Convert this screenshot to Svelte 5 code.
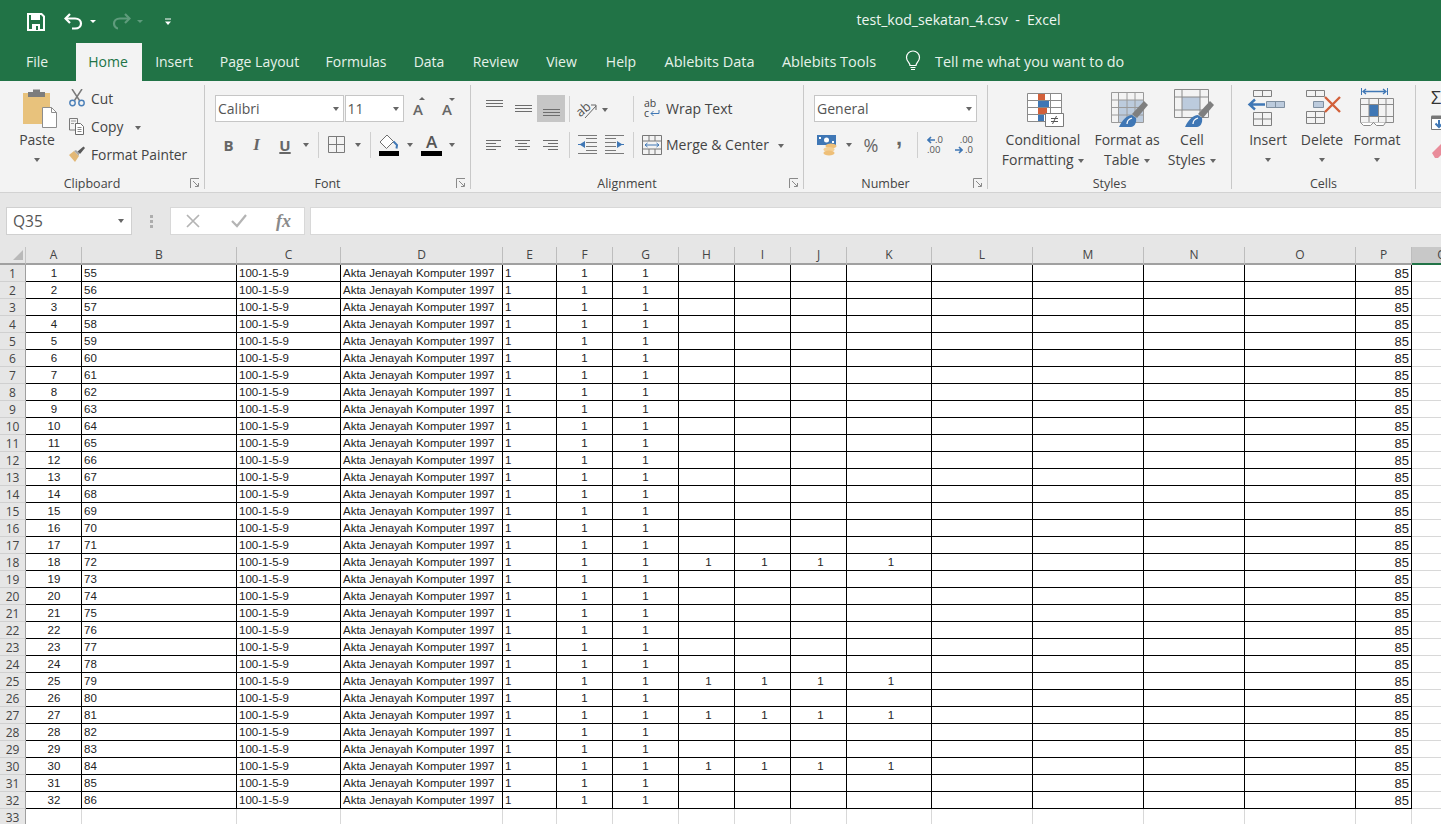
<script>
  const tabs = ['File','Home','Insert','Page Layout','Formulas','Data','Review','View','Help','Ablebits Data','Ablebits Tools'];
  const cols = ['A','B','C','D','E','F','G','H','I','J','K','L','M','N','O','P'];
  const extra = [18,25,27,30];
  const rows = Array.from({length:32},(_,i)=>i+1);
  const cellClass = (c) => {
    if (c==='B'||c==='C'||c==='D'||c==='E') return 'left';
    if (c==='P') return 'right';
    if (c==='H'||c==='I'||c==='J'||c==='K') return 'center shift';
    if (c==='A') return 'center idx';
    return 'center';
  };
  const value = (c,n) => {
    switch(c){
      case 'A': return n;
      case 'B': return n+54;
      case 'C': return '100-1-5-9';
      case 'D': return 'Akta Jenayah Komputer 1997';
      case 'E': case 'F': case 'G': return 1;
      case 'H': case 'I': case 'J': case 'K': return extra.includes(n) ? 1 : '';
      case 'P': return 85;
      default: return '';
    }
  };
</script>

{#snippet caret()}<span class="caret"></span>{/snippet}
{#snippet launcher()}
  <svg class="launcher" width="10" height="11" viewBox="0 0 10 11"><path d="M.5 10V.5H9" fill="none" stroke="#8a8a8a"/><path d="M3 3l5 5M8.500 5v3.500H5" fill="none" stroke="#8a8a8a"/></svg>
{/snippet}
{#snippet lines(l)}
  <svg width="22" height="22" viewBox="0 0 22 22">{#each l as [a,b,y]}<path d="M{a} {y+.5}H{b}" stroke="#6d6d6d"/>{/each}</svg>
{/snippet}
{#snippet sep()}<span class="vsep"></span>{/snippet}
{#snippet brush(blobX, blobY)}
  <g transform="translate({blobX} {blobY})">
    <path d="M25 -14L29 -10 18 3 13 -1Z" fill="#7f7f7f"/>
    <path d="M0 12C3 5 8 0 13 0L17 3C18 8 15 12 12 12Z" fill="#3f77b5"/>
    <path d="M8 9C8 6 10 4 13 3" fill="none" stroke="#fff" stroke-width="1.300"/>
  </g>
{/snippet}

<div class="app">
  <header class="title">
    <div class="qat">
      <svg class="save" width="18" height="18" viewBox="0 0 18 18"><path d="M1 1h13.500L17 3.500V17H1Z" fill="none" stroke="#fff" stroke-width="2"/><path d="M4 2h9v5H4Z" fill="#fff"/><path d="M5 11h8v6H5Z" fill="#fff"/><path d="M9 13h2v4H9Z" fill="#217346"/></svg>
      <svg class="undo" width="20" height="18" viewBox="0 0 20 18"><path d="M6 1L1.500 5.500 6 10" fill="none" stroke="#fff" stroke-width="2.200"/><path d="M2 5.500h9c4 0 6 2.500 6 5s-2 5-6 5H8" fill="none" stroke="#fff" stroke-width="2.200"/></svg>
      <span class="qcaret"></span>
      <svg class="redo" width="20" height="18" viewBox="0 0 20 18"><path d="M14 1l4.500 4.500L14 10" fill="none" stroke="#5f9b7c" stroke-width="2.200"/><path d="M18 5.500H9c-4 0-6 2.500-6 5s2 5 4 5" fill="none" stroke="#5f9b7c" stroke-width="2.200"/></svg>
      <span class="qcaret dim"></span>
      <svg class="custom" width="8" height="8" viewBox="0 0 8 8"><path d="M1 1h6" stroke="#fff"/><path d="M1 3.500h6L4 7Z" fill="#fff"/></svg>
    </div>
    <div class="doc">test_kod_sekatan_4.csv&nbsp; - &nbsp;Excel</div>
  </header>

  <nav class="tabs">
    {#each tabs as t}
      <div class="tab" class:active={t==='Home'}>{t}</div>
    {/each}
    <div class="tell">
      <svg width="18" height="22" viewBox="0 0 18 22"><path d="M6 15.500C6 12.500 2.500 11.500 2.500 7.500a6.500 6.500 0 0 1 13 0c0 4-3.500 5-3.500 8Z" fill="none" stroke="#fff" stroke-width="1.200"/><path d="M6.500 17.500h5M7 19.500h4" stroke="#fff" stroke-width="1.200"/></svg>
      <span>Tell me what you want to do</span>
    </div>
  </nav>

  <section class="ribbon">
    <!-- Clipboard -->
    <div class="group g-clip">
      <div class="body clip-body">
        <div class="paste">
          <svg width="40" height="40" viewBox="0 0 40 40">
            <path d="M3 5h27v31H3Z" fill="#e8c27c"/>
            <path d="M8 4h5V1.500h7V4h5v5H8Z" fill="#7d7d7d"/>
            <path d="M22.500 19.500h9l5 5v15h-14Z" fill="#fff" stroke="#8d8d8d"/>
            <path d="M31.500 19.500v5h5" fill="none" stroke="#8d8d8d"/>
          </svg>
          <span class="paste-text">Paste</span>
          <span class="paste-caret">{@render caret()}</span>
        </div>
        <div class="clip-col">
          <div class="clip-row">
            <svg width="18" height="18" viewBox="0 0 18 18"><path d="M4 0l7.500 11.500M14 0L6.500 11.500" stroke="#7a7a7a" stroke-width="1.500"/><circle cx="4.500" cy="14" r="2.700" fill="none" stroke="#4a7fb8" stroke-width="1.400"/><circle cx="13.500" cy="14" r="2.700" fill="none" stroke="#4a7fb8" stroke-width="1.400"/></svg>
            <span>Cut</span>
          </div>
          <div class="clip-row">
            <svg width="18" height="18" viewBox="0 0 18 18"><path d="M1.500 1.500h8V13h-8Z" fill="#f3f3f3" stroke="#7a7a7a"/><path d="M3 4h5M3 6.500h3" stroke="#9a9a9a"/><path d="M7.500 6.500h5l3 3v8h-8Z" fill="#fff" stroke="#6b6b6b"/><path d="M9.500 10.500h4M9.500 12.500h4M9.500 14.500h4" stroke="#8a8a8a"/></svg>
            <span>Copy</span>
            <span class="copy-caret">{@render caret()}</span>
          </div>
          <div class="clip-row">
            <svg width="18" height="18" viewBox="0 0 18 18"><path d="M1 10l5-4 5 5-4 6C5 15 3 12 1 10Z" fill="#e2b877"/><path d="M6 6l2-1 3 3 0 3Z" fill="#a8a8a8"/><path d="M9.500 6.500l6-5 1.500 1.500-5 6Z" fill="#595959"/></svg>
            <span>Format Painter</span>
          </div>
        </div>
      </div>
      <div class="label pad">Clipboard</div>
      {@render launcher()}
    </div>

    <!-- Font -->
    <div class="group g-font">
      <div class="body stack">
        <div class="row font1">
          <div class="combo">Calibri {@render caret()}</div>
          <div class="combo">11 {@render caret()}</div>
          <span class="grow-a up">A</span>
          <span class="grow-a down">A</span>
        </div>
        <div class="row font2">
          <b class="fmt">B</b>
          <i class="fmt it">I</i>
          <u class="fmt bold">U</u>
          {@render caret()}
          {@render sep()}
          <svg width="17" height="17" viewBox="0 0 17 17"><path d="M.5.500h16v16H.500ZM8.500.500v16M.5 8.500h16" fill="none" stroke="#7a7a7a"/></svg>
          {@render caret()}
          {@render sep()}
          <svg width="21" height="22" viewBox="0 0 21 22"><path d="M9 1L2 8l6.500 6.500 7-7Z" fill="#fff" stroke="#6f6f6f"/><path d="M15.500 7.500l3.500 3.500-.5 3.500" fill="none" stroke="#3f77b5" stroke-width="2"/><path d="M1 17h20v5H1Z" fill="#000"/></svg>
          {@render caret()}
          <div class="acolor"><span>A</span></div>
          {@render caret()}
        </div>
      </div>
      <div class="label pad">Font</div>
      {@render launcher()}
    </div>

    <!-- Alignment -->
    <div class="group g-align">
      <div class="body stack">
        <div class="row align">
          <span class="ic">{@render lines([[3,20,2],[3,20,5],[3,20,8]])}</span>
          <span class="ic">{@render lines([[3,20,7],[3,20,10],[3,20,13]])}</span>
          <span class="ic selected">{@render lines([[3,20,11],[3,20,14],[3,20,17]])}</span>
          {@render sep()}
          <span class="ic">
            <svg class="vis" width="24" height="22" viewBox="0 0 24 22"><text x="1" y="16" transform="rotate(-40 8 12)" font-size="13" fill="#555" font-family="Open Sans, sans-serif">ab</text><path d="M10 20L21 8M16 7h5v5" fill="none" stroke="#666"/></svg>
          </span>
          <span class="after">{@render caret()}</span>
          {@render sep()}
          <span class="ic">
            <svg class="vis" width="20" height="22" viewBox="0 0 20 22"><text x="2" y="9" font-size="10.500" fill="#444" font-family="Open Sans, sans-serif">ab</text><text x="2" y="19" font-size="10.500" fill="#444" font-family="Open Sans, sans-serif">c</text><path d="M17 12v3.500H9M11.500 13l-2.500 2.500 2.500 2.500" fill="none" stroke="#3f77b5"/></svg>
          </span>
          <span class="txt">Wrap Text</span>
        </div>
        <div class="row align">
          <span class="ic">{@render lines([[3,18,6],[3,13,9],[3,18,12],[3,13,15]])}</span>
          <span class="ic">{@render lines([[3,18,6],[6,15,9],[3,18,12],[6,15,15]])}</span>
          <span class="ic">{@render lines([[3,18,6],[8,18,9],[3,18,12],[8,18,15]])}</span>
          {@render sep()}
          <span class="ic">
            <svg width="22" height="22" viewBox="0 0 22 22"><path d="M10 4.500h11M10 8.500h11M10 12.500h11M10 16.500h11M2 19.500h19M2 1.500h19" stroke="#7a7a7a"/><path d="M9 7L3.500 10.500 9 14Z" fill="#3f77b5"/><path d="M8 10.500H2" stroke="#3f77b5"/></svg>
          </span>
          <span class="ic">
            <svg width="22" height="22" viewBox="0 0 22 22"><path d="M1 4.500h11M1 8.500h11M1 12.500h11M1 16.500h11M1 19.500h19M1 1.500h19" stroke="#7a7a7a"/><path d="M13 7l5.500 3.500L13 14Z" fill="#3f77b5"/><path d="M14 10.500h6" stroke="#3f77b5"/></svg>
          </span>
          {@render sep()}
          <span class="ic">
            <svg width="20" height="20" viewBox="0 0 20 20"><path d="M.5.500h19v19H.500ZM.5 6h19M.5 14h19M7 .500V6M13 .500V6M7 14v5.500M13 14v5.500" fill="none" stroke="#777"/><path d="M3 10h14M5.500 8L3 10l2.500 2M14.500 8l2.500 2-2.500 2" fill="none" stroke="#3f77b5"/></svg>
          </span>
          <span class="txt merge">Merge &amp; Center <span class="merge-caret">{@render caret()}</span></span>
        </div>
      </div>
      <div class="label pad">Alignment</div>
      {@render launcher()}
    </div>

    <!-- Number -->
    <div class="group g-num">
      <div class="body stack">
        <div class="row num1"><div class="combo">General {@render caret()}</div></div>
        <div class="row num2">
          <svg width="22" height="22" viewBox="0 0 22 22"><path d="M0 1h19v10H0Z" fill="#3f77b5"/><circle cx="9.500" cy="6" r="2.500" fill="#fff"/><path d="M2 3h2v2H2ZM15 7h2v2h-2Z" fill="#fff"/><ellipse cx="14" cy="12" rx="5.500" ry="2.400" fill="#eebf78"/><ellipse cx="12" cy="15.500" rx="5.500" ry="2.400" fill="#f3cf94"/><ellipse cx="12" cy="19" rx="5.500" ry="2.400" fill="#eebf78"/></svg>
          {@render caret()}
          <span class="pct">%</span>
          <span class="comma">,</span>
          {@render sep()}
          <div class="dec">
            <svg width="8" height="8" viewBox="0 0 8 8"><path d="M4 1L1 4l3 3M1 4h7" fill="none" stroke="#3f77b5" stroke-width="1.600"/></svg><span>.0</span><span class="wide">.00</span>
          </div>
          <div class="dec two">
            <span class="wide">.00</span><svg width="8" height="8" viewBox="0 0 8 8"><path d="M4 1l3 3-3 3M7 4H0" fill="none" stroke="#3f77b5" stroke-width="1.600"/></svg><span>.0</span>
          </div>
        </div>
      </div>
      <div class="label pad">Number</div>
      {@render launcher()}
    </div>

    <!-- Styles -->
    <div class="group g-styles">
      <div class="body bigs styles">
        <div class="big">
          <svg width="44" height="45" viewBox="0 0 44 45">
            <path d="M6.500 8.500h34v28h-34ZM6.500 15.500h34M6.500 22.500h34M6.500 29.500h34M17.500 8.500v28M29.500 8.500v28" fill="#fff" stroke="#8a8a8a"/>
            <path d="M17 9h7v6h-7Z" fill="#d2603a"/><path d="M17 16h11v6H17Z" fill="#3f77b5"/><path d="M17 23h9v6h-9Z" fill="#d2603a"/><path d="M17 30h6v6h-6Z" fill="#3f77b5"/>
            <path d="M24.500 28.500h18v13h-18Z" fill="#fff" stroke="#7a7a7a"/>
            <path d="M30 33.500h7M30 36.500h7M35.500 31l-4 8" stroke="#555" fill="none"/>
          </svg>
          <div class="big-text">Conditional<br/>Formatting {@render caret()}</div>
        </div>
        <div class="big">
          <svg width="44" height="45" viewBox="0 0 44 45">
            <path d="M13 15h25v22H13Z" fill="#bccbdd"/>
            <path d="M6.500 7.500h32v30h-32ZM6.500 15h32M6.500 22.500h32M6.500 30h32M13.500 7.500v30M22 7.500v30M30 7.500v30" fill="none" stroke="#9a9a9a"/>
            {@render brush(14,30)}
          </svg>
          <div class="big-text">Format as<br/>Table {@render caret()}</div>
        </div>
        <div class="big">
          <svg width="44" height="45" viewBox="0 0 44 45">
            <path d="M12 12h18v13H12Z" fill="#bccbdd"/>
            <path d="M4.500 4.500h34v28h-34ZM4.500 12h34M4.500 25h34M12 4.500v28M30 4.500v28" fill="none" stroke="#8a8a8a"/>
            {@render brush(15,30)}
          </svg>
          <div class="big-text">Cell<br/>Styles {@render caret()}</div>
        </div>
      </div>
      <div class="label">Styles</div>
    </div>

    <!-- Cells -->
    <div class="group g-cells">
      <div class="body bigs cells">
        <div class="big">
          <svg width="44" height="45" viewBox="0 0 44 45">
            <path d="M7.500 5.500h18v6h-18ZM16.500 5.500v6M7.500 27.500h18v13h-18ZM7.500 34h18M16.500 27.500v13" fill="none" stroke="#7f7f7f"/>
            <path d="M20.500 16.500h18v6h-18Z" fill="#bccbdd" stroke="#7f8fa0"/><path d="M29.500 16.500v6" stroke="#7f8fa0"/>
            <path d="M19 19.500H4M9 14.500l-5.500 5 5.500 5" fill="none" stroke="#3f77b5" stroke-width="2.400"/>
          </svg>
          <div class="big-text">Insert</div>
          <span class="big-caret">{@render caret()}</span>
        </div>
        <div class="big">
          <svg width="44" height="45" viewBox="0 0 44 45">
            <path d="M6.500 5.500h18v6h-18ZM15.500 5.500v6M6.500 26.500h18v12h-18ZM6.500 32.500h18M15.500 26.500v12" fill="none" stroke="#7f7f7f"/>
            <path d="M13.500 16.500h10v6h-10Z" fill="#bccbdd" stroke="#7f8fa0"/>
            <path d="M25 12l15 15M40 12L25 27" stroke="#d2603a" stroke-width="2.400"/>
          </svg>
          <div class="big-text">Delete</div>
          <span class="big-caret">{@render caret()}</span>
        </div>
        <div class="big">
          <svg width="44" height="45" viewBox="0 0 44 45">
            <path d="M6.500 3v7M32.500 3v7" stroke="#3f77b5"/>
            <path d="M8 6.500h23M11 4L8 6.500 11 9M28 4l3 2.500L28 9" fill="none" stroke="#3f77b5" stroke-width="1.300"/>
            <path d="M14 19h9v12h-9Z" fill="#3f77b5"/>
            <path d="M5.500 13.500h33v24h-33ZM5.500 19.500h33M5.500 31.500h33M14 13.500v24M23.500 13.500v24M31 13.500v24" fill="none" stroke="#8a8a8a"/>
            <path d="M5.500 37.500l3 3h7l3-3M18.500 37.500l3 3h7l2-3" fill="#fff" stroke="#8a8a8a"/>
          </svg>
          <div class="big-text">Format</div>
          <span class="big-caret">{@render caret()}</span>
        </div>
      </div>
      <div class="label">Cells</div>
    </div>

    <!-- Editing -->
    <div class="group-last">
      <span class="sigma">Σ</span>
      <svg class="fill" width="16" height="16" viewBox="0 0 16 16"><path d="M.5 1.500h15v13H.5Z" fill="#fff" stroke="#777"/><path d="M.5.500h15V4H.5Z" fill="#777"/><path d="M8 5v7M4.500 8.500L8 12l3.500-3.500" fill="none" stroke="#3f77b5" stroke-width="2"/></svg>
      <svg class="eraser" width="16" height="16" viewBox="0 0 16 16"><path d="M1 10l9-9 6 5-9 9H4Z" fill="#e98c9a"/></svg>
    </div>
  </section>

  <section class="fbar">
    <div class="namebox">Q35 {@render caret()}</div>
    <div class="dots"><i></i><i></i><i></i></div>
    <div class="fbtns">
      <svg width="16" height="16" viewBox="0 0 16 16"><path d="M2 2l12 12M14 2L2 14" stroke="#b4b4b4" stroke-width="1.700"/></svg>
      <svg width="18" height="16" viewBox="0 0 18 16"><path d="M2 8l5 5L16 2" fill="none" stroke="#b4b4b4" stroke-width="2.200"/></svg>
      <span class="fx">fx</span>
    </div>
    <div class="finput"></div>
  </section>

  <section class="sheet">
    <div class="hd corner"><svg width="10" height="10" viewBox="0 0 10 10"><path d="M10 0v10H0Z" fill="#b9b9b9"/></svg></div>
    {#each cols as c}<div class="hd col">{c}</div>{/each}
    <div class="hd col q">Q</div>
    {#each rows as n}
      <div class="hd rn">{n}</div>
      {#each cols as c}
        <div class="cell {cellClass(c)}">{value(c,n)}</div>
      {/each}
      <div class="cell blank"></div>
    {/each}
    <div class="hd rn">33</div>
    {#each cols as c}<div class="cell blank"></div>{/each}
    <div class="cell blank"></div>
  </section>
</div>

<style>
  :global(body){margin:0;overflow:hidden;background:#fff;}
  .app{width:1441px;height:824px;overflow:hidden;display:flex;flex-direction:column;font-family:"Open Sans","Noto Sans",sans-serif;color:#444;}

  .title{height:43px;background:#217346;display:flex;flex:none;align-items:center;color:#fff;position:relative;}
  .qat{display:flex;align-items:center;padding-left:27px;}
  .save{margin-right:19px;}
  .qcaret{width:0;height:0;border:3px solid transparent;border-top:3px solid #fff;border-bottom:0;margin:0 17px 0 6px;}
  .qcaret.dim{border-top-color:#5f9b7c;margin-right:21px;}
  .redo{margin-left:-2px;}
  .doc{position:absolute;left:0;right:0;top:10px;line-height:20px;padding-left:476px;text-align:center;font-size:14.100px;color:#eef6f1;white-space:nowrap;}

  .tabs{height:38px;flex:none;background:#217346;display:grid;grid-template-columns:76px 66px 64px 107px 86px 60px 73px 59px 60px 117px 122px 1fr;font-size:14px;color:#e6f2ea;}
  .tab{display:flex;align-items:center;justify-content:center;padding-bottom:1px;white-space:nowrap;}
  .tab:first-child{padding-right:2px;}
  .tab:nth-child(n+10){font-size:14.500px;}
  .tab.active{background:#f3f3f3;color:#217346;padding-right:2px;}
  .tell{display:flex;align-items:center;padding-left:14px;gap:13px;font-size:14.400px;padding-bottom:2px;}

  .ribbon{flex:none;background:#f3f3f3;border-bottom:1px solid #d2d2d2;display:flex;padding-top:4px;height:107px;font-size:14px;}
  .group{flex:none;position:relative;height:104px;border-right:1px solid #c8c8c8;box-sizing:border-box;display:flex;flex-direction:column;}
  .g-clip{width:205px;}
  .g-font{width:266px;}
  .g-align{width:333px;}
  .g-num{width:184px;}
  .g-styles{width:244px;}
  .g-cells{width:184px;}
  .group-last{display:flex;flex-direction:column;padding:1px 0 0 15px;flex:none;}
  .body{flex:1;min-height:0;}
  .label{height:14px;line-height:14px;text-align:center;font-size:12.500px;color:#444;margin-bottom:-2px;}
  .label.pad{padding-right:20px;}
  .launcher{position:absolute;right:4px;bottom:0;}

  .caret{display:inline-block;width:0;height:0;border:3.500px solid transparent;border-top:4px solid #666;border-bottom:0;vertical-align:middle;}
  .vsep{width:1px;height:26px;background:#cfcfcf;justify-self:center;}

  .clip-body{display:flex;}
  .paste{width:46px;margin-left:14px;padding-top:3px;display:flex;flex-direction:column;align-items:center;}
  .paste svg{margin-left:5px;}
  .paste-text{line-height:16px;margin-top:4px;font-size:14px;}
  .paste-caret{line-height:10px;margin-top:6px;}
  .clip-col{margin-left:8px;margin-top:-1px;font-size:13.800px;}
  .clip-row{height:28px;display:flex;align-items:center;gap:5px;white-space:nowrap;}
  .copy-caret{margin-left:7px;}

  .stack{padding-top:10px;display:flex;flex-direction:column;gap:9px;box-sizing:border-box;}
  .row{height:27px;align-items:center;justify-items:center;}
  .combo{box-sizing:border-box;height:27px;background:#fff;border:1px solid #c6c6c6;display:flex;align-items:center;justify-content:space-between;padding:0 4px 0 2px;font-size:14px;color:#555;width:100%;}
  .g-font .stack{padding-left:10px;}
  .font1{display:grid;grid-template-columns:129px 59px 30px 28px;column-gap:0;}
  .font1 .combo+.combo{margin-left:1px;width:59px;}
  .grow-a{font-size:15px;font-weight:600;color:#666;position:relative;line-height:20px;}
  .grow-a::after{content:"";position:absolute;left:50%;top:-2px;margin-left:1px;border:3px solid transparent;border-bottom:3px solid #666;border-top:0;}
  .grow-a.down::after{border-bottom:0;border-top:3px solid #666;top:-1px;left:60%;}
  .font2{display:grid;grid-template-columns:27px 29px 28px 14px 10px 26px 17px 8px 29px 14px 29px 12px;}
  .fmt{font-size:15px;font-weight:700;color:#666;font-family:"Open Sans",sans-serif;text-decoration-thickness:2px;}
  .it{font-family:"Liberation Serif",serif;font-size:17px;}
  .acolor{width:21px;height:23px;position:relative;display:flex;flex-direction:column;align-items:center;border-bottom:5px solid #000;box-sizing:border-box;}
  .acolor span{font-size:17px;font-weight:600;line-height:18px;color:#555;}

  .g-align .stack{padding-left:9px;}
  .align{display:grid;grid-template-columns:28px 29px 28px 8px 28px 28px 8px 29px auto;justify-content:start;}
  .ic{width:28px;height:27px;display:flex;align-items:center;justify-content:center;}
  .vis{overflow:visible;}
  .selected{background:#c6c6c6;}
  .after{justify-self:start;padding-left:1px;}
  .txt{justify-self:start;white-space:nowrap;font-size:14px;}
  .merge{display:flex;align-items:center;}
  .merge-caret{margin-left:9px;}

  .g-num .stack{padding-left:10px;}
  .num1{display:flex;width:163px;}
  .num2{display:grid;grid-template-columns:28px 14px 30px 26px 10px 28px 28px;}
  .pct{font-size:18px;color:#666;}
  .comma{font-family:"Liberation Sans",sans-serif;font-size:22px;font-weight:700;color:#666;line-height:20px;margin-top:-13px;}
  .dec{display:grid;grid-template-columns:8px 10px;font-size:9.500px;line-height:10px;color:#555;align-items:center;justify-content:center;}
  .dec .wide{grid-column:1/3;}
  .dec.two{justify-items:end;}

  .bigs{display:flex;}
  .styles{padding-left:10px;}
  .cells{padding-left:9px;}
  .big{display:flex;flex-direction:column;align-items:center;}
  .styles .big:nth-child(1){width:90px;}
  .styles .big:nth-child(2){width:78px;}
  .styles .big:nth-child(3){width:52px;}
  .cells .big:nth-child(1){width:54px;}
  .cells .big:nth-child(2){width:54px;}
  .cells .big:nth-child(3){width:56px;}
  .big-text{text-align:center;line-height:20px;white-space:nowrap;}
  .big-text .caret{margin-left:1px;}
  .big-caret{line-height:10px;margin-top:4px;}

  .sigma{font-size:18px;line-height:18px;color:#333;height:27px;padding-top:2px;box-sizing:border-box;}
  .fill{margin-top:2px;}
  .eraser{margin-top:12px;}

  .fbar{height:54px;flex:none;background:#e6e6e6;display:flex;box-sizing:border-box;padding-top:14px;align-items:flex-start;}
  .namebox{box-sizing:border-box;width:126px;height:28px;margin-left:6px;background:#fff;border:1px solid #d0d0d0;display:flex;align-items:center;justify-content:space-between;padding:0 7px 0 6px;font-size:15.500px;color:#555;}
  .dots{width:38px;height:28px;display:flex;flex-direction:column;align-items:center;justify-content:center;gap:2px;}
  .dots i{width:3px;height:3px;background:#adadad;}
  .fbtns{box-sizing:border-box;width:135px;height:28px;background:#fff;border:1px solid #d8d8d8;display:grid;grid-template-columns:44px 48px 1fr;align-items:center;justify-items:center;}
  .fx{font-family:"Liberation Serif",serif;font-style:italic;font-weight:700;font-size:18px;color:#8a8a8a;}
  .finput{flex:1;margin-left:5px;height:28px;background:#fff;border:1px solid #d8d8d8;border-right:0;box-sizing:border-box;}

  .sheet{flex:1;min-height:0;display:grid;grid-template-columns:26px 56px 155px 104px 162px 54px 56px 66px 56px 56px 56px 85px 101px 111px 101px 111px 56px 60px;grid-template-rows:18px repeat(33,17px);background:#fff;width:1501px;font-family:"Liberation Sans",Arial,sans-serif;}
  .hd{background:#e6e6e6;box-sizing:border-box;font-family:"Open Sans",sans-serif;font-size:12px;color:#444;display:flex;align-items:center;justify-content:center;}
  .corner{border-bottom:2px solid #a0a0a0;border-right:1px solid #c4c4c4;justify-content:flex-end;padding-right:2px;}
  .col{border-right:1px solid #bdbdbd;border-bottom:2px solid #a0a0a0;padding-bottom:1px;}
  .col.q{background:#c8c8c8;border-bottom:2px solid #217346;border-right:0;}
  .rn{border-right:1px solid #9f9f9f;border-bottom:1px solid #d0d0d0;}
  .cell{box-sizing:border-box;border-right:1px solid #000;border-bottom:1px solid #000;font-size:11.500px;color:#222;line-height:16px;padding:0 2px;white-space:nowrap;overflow:hidden;}
  .left{text-align:left;}
  .center{text-align:center;}
  .shift{padding-left:6px;}
  .idx{padding-left:3px;}
  .right{text-align:right;font-size:13px;line-height:18px;}
  .blank{border-color:#d8d8d8;}
</style>
